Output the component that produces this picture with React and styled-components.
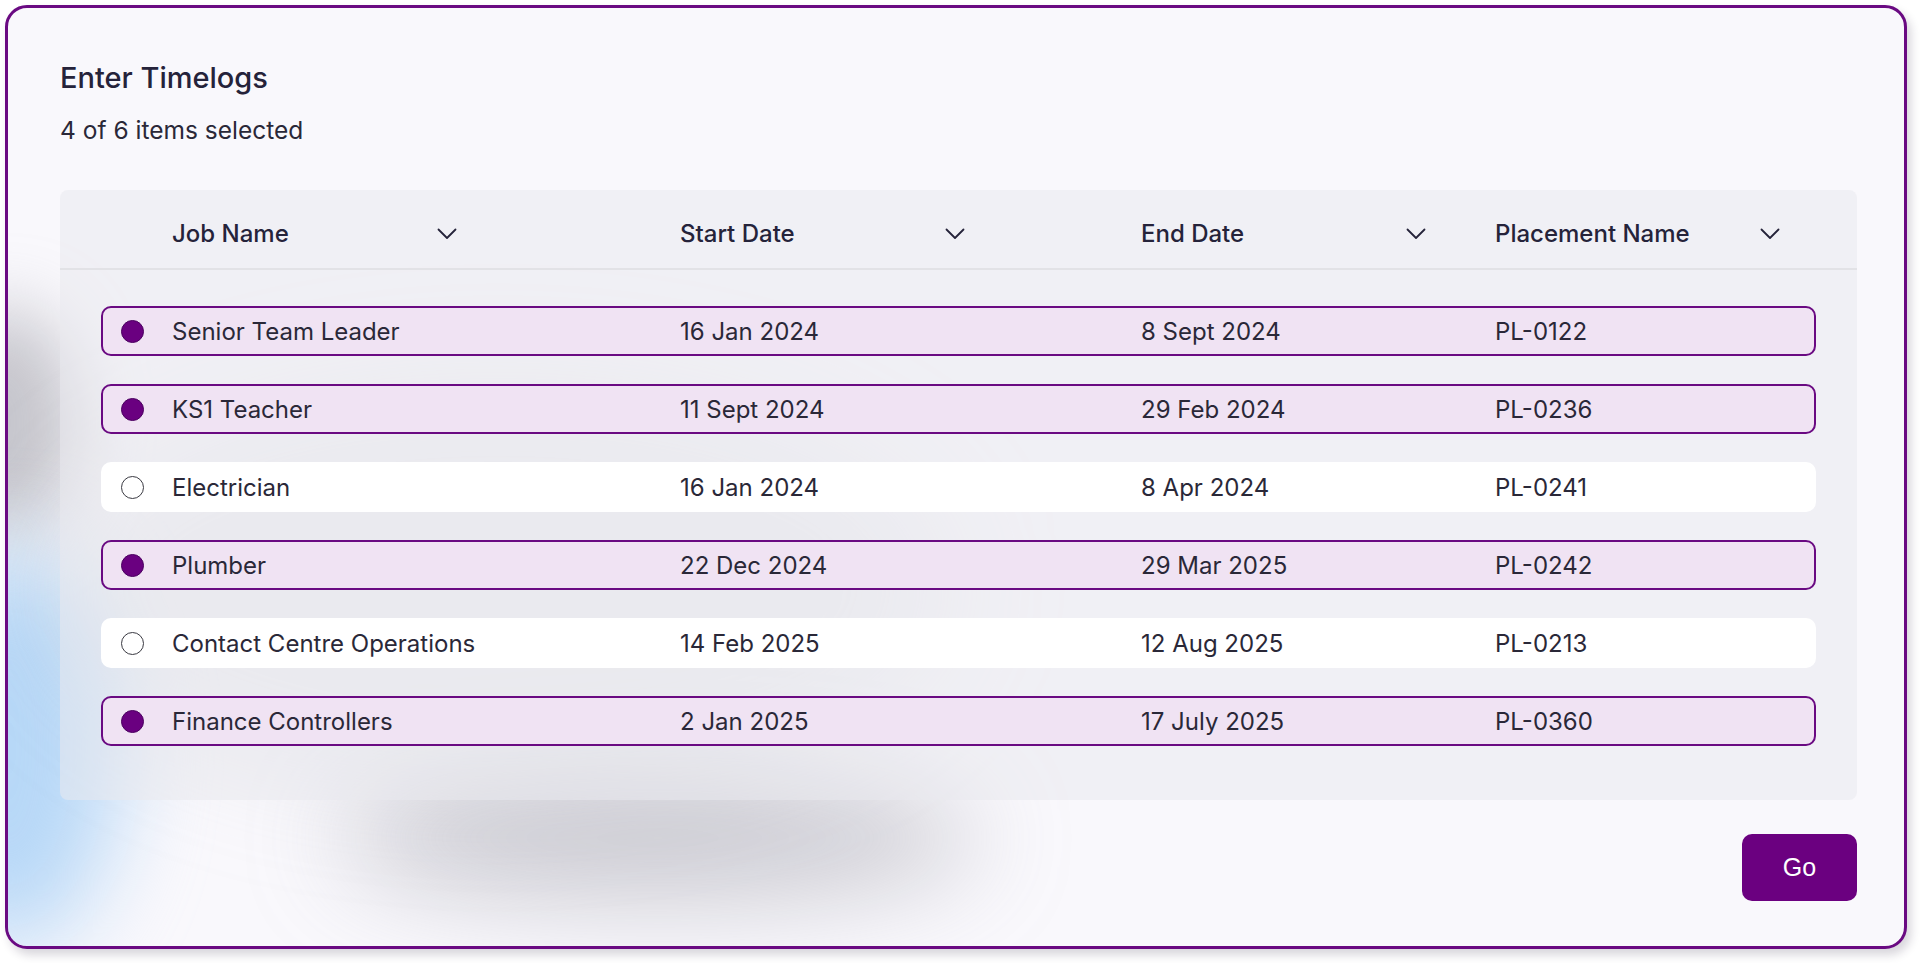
import React from "react";
import styled, { createGlobalStyle } from "styled-components";

const GlobalStyle = createGlobalStyle`
  html, body {
    margin: 0;
    padding: 0;
    background: #ffffff;
  }
  body {
    font-family: Inter, "Noto Sans", "Liberation Sans", sans-serif;
    color: #272536;
  }
  * {
    box-sizing: border-box;
  }
`;

const COLUMNS = "508px 461px 354px 1fr";

const Page = styled.div`
  width: 1920px;
  height: 963px;
  padding: 5px 0 0 5px;
`;

const Card = styled.section`
  position: relative;
  width: 1902px;
  height: 944px;
  border: 3px solid #6a0a82;
  border-radius: 22px;
  background: #f9f8fc;
  box-shadow: 4px 6px 10px rgba(40, 30, 60, 0.18);
  overflow: hidden;
  padding: 52px 47px 45px 52px;
  display: flex;
  flex-direction: column;
`;

/* soft coloured haze sitting behind the card contents */
const Glow = styled.div`
  position: absolute;
  left: ${(p) => p.$x}px;
  top: ${(p) => p.$y}px;
  width: ${(p) => p.$w}px;
  height: ${(p) => p.$h}px;
  border-radius: 50%;
  background: ${(p) => p.$color};
  filter: blur(${(p) => p.$blur}px);
  pointer-events: none;
`;

const Content = styled.div`
  position: relative;
  z-index: 1;
  display: flex;
  flex-direction: column;
  height: 100%;
`;

const Title = styled.h1`
  margin: 0;
  font-size: 29px;
  font-weight: 500;
  line-height: 35px;
  color: #25233a;
`;

const Subtitle = styled.p`
  margin: 21px 0 0;
  font-size: 24.5px;
  line-height: 29px;
  color: #2a2838;
`;

const Table = styled.div`
  margin-top: 45px;
  width: 1797px;
  height: 610px;
  border-radius: 8px;
  background: rgba(234, 234, 239, 0.55);
  display: flex;
  flex-direction: column;
`;

const HeaderRow = styled.div`
  display: grid;
  grid-template-columns: 112px ${COLUMNS};
  align-items: center;
  height: 80px;
  padding-top: 9px;
  border-bottom: 2px solid #e2e2e6;
`;

const HeaderCell = styled.div`
  width: 285px;
  display: flex;
  align-items: center;
  justify-content: space-between;
  font-size: 24px;
  font-weight: 450;
  color: #25233a;
`;

const Body = styled.div`
  display: flex;
  flex-direction: column;
  gap: 28px;
  padding: 36px 41px 0;
`;

const Row = styled.div`
  display: grid;
  grid-template-columns: 69px ${COLUMNS};
  align-items: center;
  height: 50px;
  border-radius: 10px;
  border: 2px solid ${(p) => (p.$selected ? "#6a0a82" : "transparent")};
  background: ${(p) => (p.$selected ? "#f0e3f3" : "#ffffff")};
  font-size: 24px;
  color: #2a2838;
`;

const Radio = styled.span`
  width: 23px;
  height: 23px;
  margin-left: 18px;
  border-radius: 50%;
  border: 1.5px solid ${(p) => (p.$checked ? "#4b0060" : "#3a3a42")};
  background: ${(p) => (p.$checked ? "#6a0080" : "#ffffff")};
`;

const Footer = styled.div`
  margin-top: 34px;
  display: flex;
  justify-content: flex-end;
`;

const GoButton = styled.button`
  width: 115px;
  height: 67px;
  border: none;
  border-radius: 10px;
  background: #6b0080;
  color: #ffffff;
  font-family: "Liberation Sans", Arial, sans-serif;
  font-size: 25px;
  cursor: pointer;
`;

const Chevron = () => (
  <svg width="20" height="12" viewBox="0 0 20 12" fill="none">
    <polyline
      points="1.5,1.5 10,10 18.5,1.5"
      stroke="#25233a"
      strokeWidth="1.8"
      strokeLinecap="round"
      strokeLinejoin="round"
    />
  </svg>
);

const headers = ["Job Name", "Start Date", "End Date", "Placement Name"];

const timelogs = [
  { job: "Senior Team Leader", start: "16 Jan 2024", end: "8 Sept 2024", placement: "PL-0122", selected: true },
  { job: "KS1 Teacher", start: "11 Sept 2024", end: "29 Feb 2024", placement: "PL-0236", selected: true },
  { job: "Electrician", start: "16 Jan 2024", end: "8 Apr 2024", placement: "PL-0241", selected: false },
  { job: "Plumber", start: "22 Dec 2024", end: "29 Mar 2025", placement: "PL-0242", selected: true },
  { job: "Contact Centre Operations", start: "14 Feb 2025", end: "12 Aug 2025", placement: "PL-0213", selected: false },
  { job: "Finance Controllers", start: "2 Jan 2025", end: "17 July 2025", placement: "PL-0360", selected: true },
];

export default function App() {
  const selectedCount = timelogs.filter((t) => t.selected).length;

  return (
    <Page>
      <GlobalStyle />
      <Card>
        <Glow $x={-80} $y={300} $w={150} $h={230} $color="rgba(155, 155, 164, 0.55)" $blur={35} />
        <Glow $x={-110} $y={540} $w={220} $h={400} $color="rgba(175, 212, 246, 0.9)" $blur={45} />
        <Glow $x={40} $y={380} $w={900} $h={400} $color="rgba(180, 184, 190, 0.2)" $blur={60} />
        <Glow $x={330} $y={770} $w={640} $h={120} $color="rgba(130, 130, 142, 0.4)" $blur={50} />

        <Content>
          <Title>Enter Timelogs</Title>
          <Subtitle>
            {selectedCount} of {timelogs.length} items selected
          </Subtitle>

          <Table>
            <HeaderRow>
              <span />
              {headers.map((h) => (
                <HeaderCell key={h}>
                  {h}
                  <Chevron />
                </HeaderCell>
              ))}
            </HeaderRow>

            <Body>
              {timelogs.map((t) => (
                <Row key={t.placement} $selected={t.selected}>
                  <Radio $checked={t.selected} />
                  <span>{t.job}</span>
                  <span>{t.start}</span>
                  <span>{t.end}</span>
                  <span>{t.placement}</span>
                </Row>
              ))}
            </Body>
          </Table>

          <Footer>
            <GoButton>Go</GoButton>
          </Footer>
        </Content>
      </Card>
    </Page>
  );
}
